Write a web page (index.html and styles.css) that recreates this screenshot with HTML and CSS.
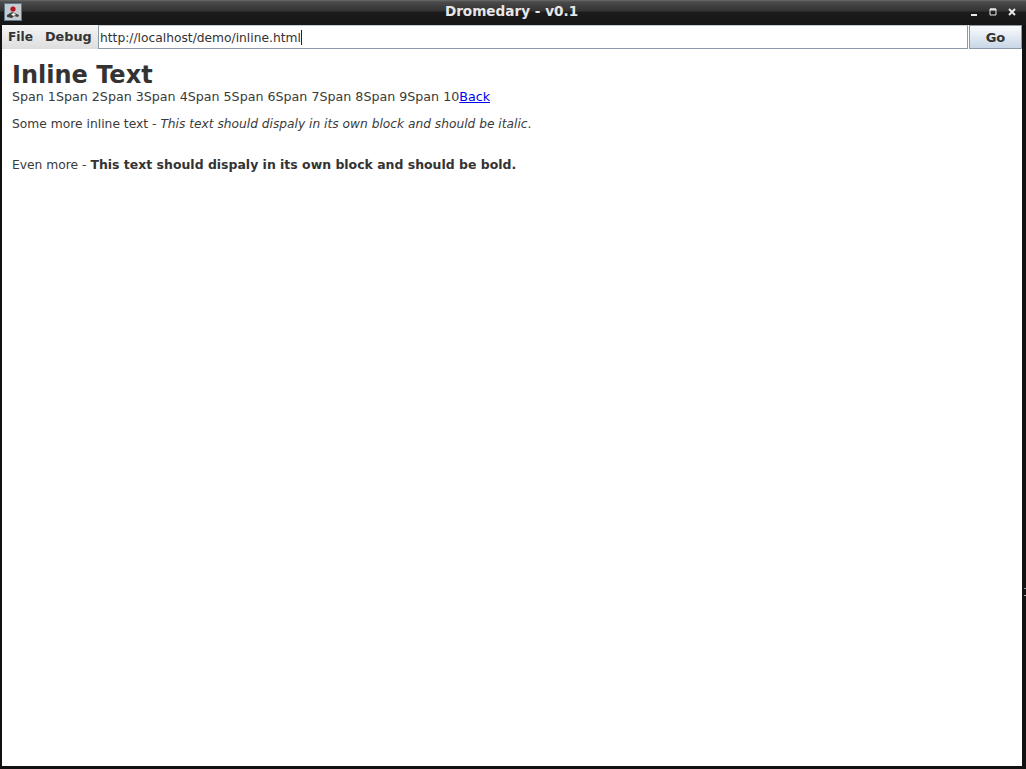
FILE: index.html
```html
<!DOCTYPE html>
<html lang="en">
<head>
<meta charset="UTF-8">
<title>Dromedary - v0.1</title>
<link rel="stylesheet" href="styles.css">
</head>

<body>
<div class="window">
    <div class="titlebar">
        <svg class="app-icon" width="18" height="18" viewBox="0 0 18 18">
            <rect x="0.5" y="0.5" width="17" height="17" fill="#c4ccd2" stroke="#5f7a8c"/>
            <path d="M3 12l5-3 7 3-1 2-4-1-2 2-5-1z" fill="#3c3c3c"/>
            <path d="M7 11l3-1 2 2-3 1z" fill="#f0f0f0"/>
            <circle cx="9" cy="6" r="2.6" fill="#b5141e"/>
        </svg>
        <span class="title">Dromedary - v0.1</span>
        <div class="window-buttons">
            <svg width="8" height="8" viewBox="0 0 8 8"><rect x="1" y="6" width="6" height="2" fill="#e8e8e8"/></svg>
            <svg width="8" height="8" viewBox="0 0 8 8"><path d="M1 1h6v6H1z" fill="none" stroke="#e8e8e8" stroke-width="1"/><path d="M1 1.5h6" stroke="#e8e8e8" stroke-width="2"/></svg>
            <svg width="8" height="8" viewBox="0 0 8 8"><path d="M1 1l6 6M7 1l-6 6" stroke="#e8e8e8" stroke-width="2"/></svg>
        </div>
    </div>

    <div class="toolbar">
        <div class="menu">
            <span class="menu-file">File</span>
            <span>Debug</span>
        </div>
        <div class="address">http://localhost/demo/inline.html<span class="caret"></span></div>
        <button class="go">Go</button>
    </div>

    <div class="content">
        <h1>Inline Text</h1>
        <div class="spans"><span>Span 1</span><span>Span 2</span><span>Span 3</span><span>Span 4</span><span>Span 5</span><span>Span 6</span><span>Span 7</span><span>Span 8</span><span>Span 9</span><span>Span 10</span><a href="#">Back</a></div>
        <p class="italic-line">Some more inline text - <em>This text should dispaly in its own block and should be italic</em>.</p>
        <p class="bold-line">Even more - <strong>This text should dispaly in its own block and should be bold.</strong></p>
    </div>

    <div class="edge-mark"></div>
</div>
</body>
</html>
```

FILE: styles.css
```css
html, body {
    margin: 0;
    height: 100%;
}
body {
    font-family: "DejaVu Sans", sans-serif;
    background-color: #111;
}
.window {
    display: flex;
    flex-direction: column;
    position: relative;
    height: 769px;
    box-sizing: border-box;
    padding: 0 4px 3px 2px;
}
.titlebar {
    display: flex;
    align-items: flex-start;
    justify-content: center;
    position: relative;
    height: 25px;
    margin: 0 -4px 0 -2px;
    padding-right: 3px;
    box-sizing: border-box;
    background: linear-gradient(#6a6a6a 0, #4a4a4a 2px, #333 11px, #1c1c1c 12px, #161616 100%);
}
.app-icon {
    position: absolute;
    left: 4px;
    top: 3px;
}
.title {
    margin-top: 3px;
    color: #e6e6e6;
    font-size: 13.6px;
    line-height: 16px;
    font-weight: bold;
}
.window-buttons {
    position: absolute;
    right: 10px;
    top: 8px;
    display: flex;
    gap: 11px;
}
.toolbar {
    display: flex;
    height: 24px;
    background-color: #fff;
}
.menu {
    display: flex;
    align-items: baseline;
    width: 96px;
    box-sizing: border-box;
    padding: 4px 6px 0;
    font-size: 12.8px;
    font-weight: bold;
    color: #333;
    background: linear-gradient(#f4f4f4, #dedede);
}
.menu-file {
    width: 37px;
    font-size: 12.2px;
}
.address {
    width: 870px;
    display: flex;
    align-items: center;
    box-sizing: border-box;
    padding: 1px 0 0 1px;
    font-size: 12.27px;
    color: #333;
    border: 1px solid #8a9aab;
    border-top-color: #c4ccd4;
}
.caret {
    width: 1px;
    height: 15px;
    background-color: #222;
}
.go {
    width: 53px;
    margin-left: 1px;
    padding: 0;
    font-family: inherit;
    font-size: 13px;
    font-weight: bold;
    color: #333;
    border: 1px solid #8a9aab;
    background: linear-gradient(#fbfcfe, #c8d6e6);
}
.content {
    flex: 1;
    background-color: #fff;
    padding: 12px 10px 10px;
    color: #3a3a3a;
    font-size: 12.3px;
}
h1 {
    margin: 0;
    font-size: 24px;
    line-height: 28px;
    color: #333;
}
.spans {
    font-size: 12.66px;
    line-height: 15px;
}
a {
    color: #00e;
}
p {
    margin: 0;
    line-height: 15px;
}
.italic-line {
    margin-top: 13px;
}
.bold-line {
    margin-top: 25px;
}
em {
    font-size: 12.22px;
}
strong {
    font-size: 12.48px;
    color: #333;
}
.edge-mark {
    position: absolute;
    right: 0;
    top: 588px;
    width: 2px;
    height: 8px;
    border-top: 1px solid #8a9aab;
    border-bottom: 1px solid #b8b0b0;
    box-sizing: border-box;
}
```
